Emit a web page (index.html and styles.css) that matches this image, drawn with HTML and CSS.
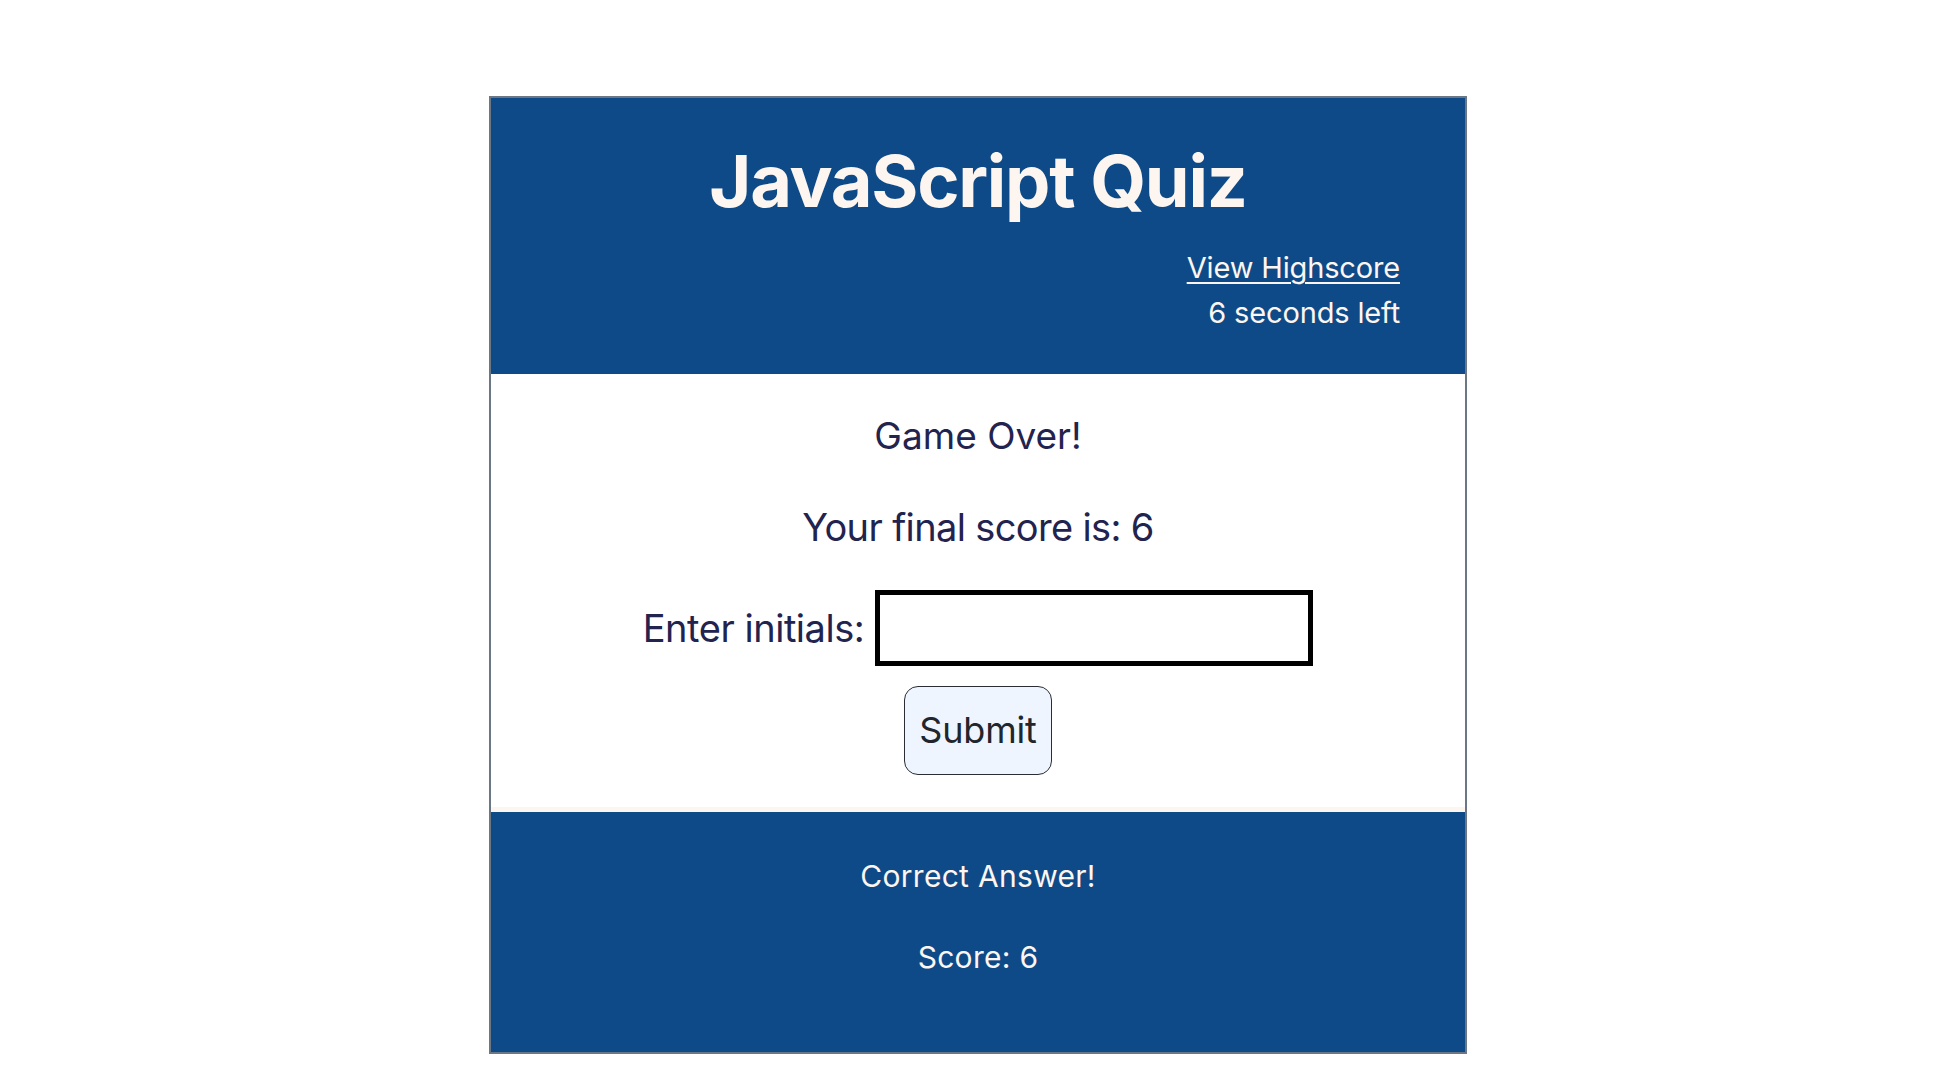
FILE: index.html
```html
<!DOCTYPE html>
<html lang="en">
<head>
<meta charset="utf-8">
<title>JavaScript Quiz</title>
<link rel="stylesheet" href="styles.css">
</head>
<body>
<div class="quiz">
  <header class="quiz-header">
    <h1 class="quiz-title">JavaScript Quiz</h1>
    <div class="quiz-meta">
      <a class="highscore-link" href="#">View Highscore</a>
      <div class="timer">6 seconds left</div>
    </div>
  </header>
  <main class="quiz-main">
    <h2 class="game-over">Game Over!</h2>
    <p class="final-score">Your final score is: 6</p>
    <form class="initials-form">
      <div class="initials-row">
        <label class="initials-label" for="initials">Enter initials:</label>
        <input class="initials-input" id="initials" type="text">
      </div>
      <button class="submit-btn" type="button">Submit</button>
    </form>
  </main>
  <footer class="quiz-footer">
    <p class="feedback">Correct Answer!</p>
    <p class="score">Score: 6</p>
  </footer>
</div>
</body>
</html>
```

FILE: styles.css
```css
html, body {
  margin: 0;
  padding: 0;
  background: #ffffff;
}

body {
  font-family: Inter, "Noto Sans", "Liberation Sans", sans-serif;
  padding-top: 96px;
}

.quiz {
  box-sizing: border-box;
  width: 50%;
  margin: 0 auto;
  border: 2px solid #6b7784;
  background: #fdf6f0;
  height: 958px;
  display: flex;
  flex-direction: column;
}

.quiz-header {
  background: #0f4a88;
  color: #fdf6f0;
  padding: 40px 65px 39px;
}

.quiz-title {
  margin: 0;
  font-size: 72px;
  font-weight: 700;
  line-height: 1.2;
  text-align: center;
  letter-spacing: -1.25px;
}

.quiz-meta {
  margin-top: 21px;
  display: flex;
  flex-direction: column;
  align-items: flex-end;
  font-size: 29px;
  line-height: 45px;
  letter-spacing: -0.15px;
}

.highscore-link {
  color: #fdf6f0;
  text-decoration: underline;
  text-underline-offset: 4px;
  text-decoration-thickness: 2px;
}

.timer {
  color: #fdf6f0;
}

.quiz-main {
  background: #ffffff;
  color: #22234e;
  padding: 40px 0 32px;
  margin-bottom: 5px;
  display: flex;
  flex-direction: column;
  align-items: center;
}

.game-over {
  margin: 0;
  font-size: 37px;
  font-weight: 400;
  line-height: 1.2;
}

.final-score {
  margin: 46px 0 0;
  font-size: 38px;
  line-height: 1.2;
  letter-spacing: -0.64px;
}

.initials-form {
  margin-top: 40px;
  display: flex;
  flex-direction: column;
  align-items: center;
  gap: 20px;
}

.initials-row {
  display: flex;
  align-items: center;
  gap: 11px;
}

.initials-label {
  font-size: 38px;
  line-height: 1.2;
  letter-spacing: -0.47px;
}

.initials-input {
  box-sizing: border-box;
  width: 438px;
  height: 76px;
  border: 5px solid #000000;
  background: #ffffff;
  margin: 0;
  padding: 0 10px;
  font-size: 30px;
  font-family: inherit;
  outline: none;
}

.submit-btn {
  font-family: inherit;
  font-size: 36px;
  line-height: 1.2;
  letter-spacing: -0.2px;
  color: #22262c;
  background: #eef5ff;
  border: 1px solid #2a2d33;
  border-radius: 14px;
  padding: 22px 14px 21px;
  margin: 0;
}

.quiz-footer {
  flex: 1;
  background: #0f4a88;
  color: #fdf6f0;
  padding-top: 46px;
  display: flex;
  flex-direction: column;
  align-items: center;
}

.feedback {
  margin: 0;
  font-size: 30px;
  line-height: 1.2;
  letter-spacing: 0.3px;
}

.score {
  margin: 45px 0 0;
  font-size: 30px;
  line-height: 1.2;
  letter-spacing: 0.3px;
}
```
